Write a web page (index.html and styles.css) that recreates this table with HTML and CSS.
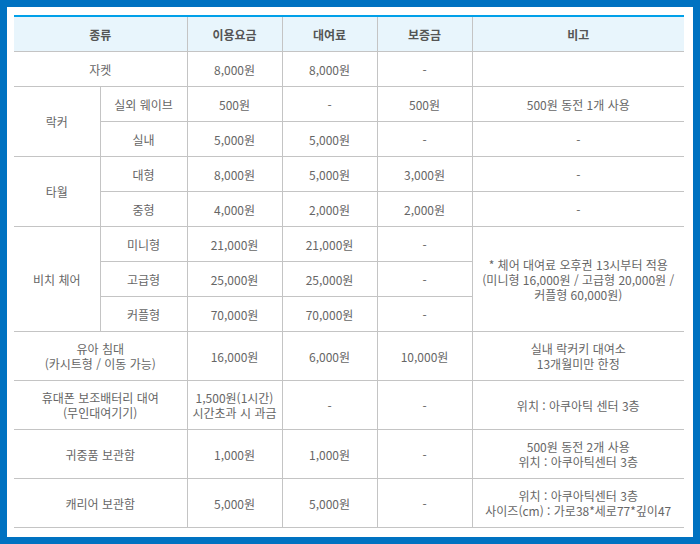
FILE: index.html
```html
<!DOCTYPE html>
<html lang="ko">
<head>
<meta charset="utf-8">
<link rel="stylesheet" href="styles.css">
</head>
<body>
<div class="frame">
<table class="fee">
<colgroup>
<col class="c1"><col class="c2"><col class="c3"><col class="c4"><col class="c5"><col class="c6">
</colgroup>
<thead>
<tr><th colspan="2">종류</th><th>이용요금</th><th>대여료</th><th>보증금</th><th>비고</th></tr>
</thead>
<tbody>
<tr><td colspan="2">자켓</td><td>8,000원</td><td>8,000원</td><td>-</td><td></td></tr>
<tr><td rowspan="2" class="lead">락커</td><td>실외 웨이브</td><td>500원</td><td>-</td><td>500원</td><td>500원 동전 1개 사용</td></tr>
<tr><td>실내</td><td>5,000원</td><td>5,000원</td><td>-</td><td>-</td></tr>
<tr><td rowspan="2" class="lead">타월</td><td>대형</td><td>8,000원</td><td>5,000원</td><td>3,000원</td><td>-</td></tr>
<tr><td>중형</td><td>4,000원</td><td>2,000원</td><td>2,000원</td><td>-</td></tr>
<tr><td rowspan="3" class="lead">비치 체어</td><td>미니형</td><td>21,000원</td><td>21,000원</td><td>-</td><td rowspan="3">* 체어 대여료 오후권 13시부터 적용<br>(미니형 16,000원 / 고급형 20,000원 /<br>커플형 60,000원)</td></tr>
<tr><td>고급형</td><td>25,000원</td><td>25,000원</td><td>-</td></tr>
<tr><td>커플형</td><td>70,000원</td><td>70,000원</td><td>-</td></tr>
<tr class="tall"><td colspan="2">유아 침대<br>(카시트형 / 이동 가능)</td><td>16,000원</td><td>6,000원</td><td>10,000원</td><td>실내 락커키 대여소<br>13개월미만 한정</td></tr>
<tr class="tall"><td colspan="2">휴대폰 보조배터리 대여<br>(무인대여기기)</td><td>1,500원(1시간)<br>시간초과 시 과금</td><td>-</td><td>-</td><td>위치 : 아쿠아틱 센터 3층</td></tr>
<tr class="tall"><td colspan="2">귀중품 보관함</td><td>1,000원</td><td>1,000원</td><td>-</td><td>500원 동전 2개 사용<br>위치 : 아쿠아틱센터 3층</td></tr>
<tr class="tall"><td colspan="2">캐리어 보관함</td><td>5,000원</td><td>5,000원</td><td>-</td><td>위치 : 아쿠아틱센터 3층<br>사이즈(cm) : 가로38*세로77*깊이47</td></tr>
</tbody>
</table>
</div>
</body>
</html>
```
FILE: styles.css
```css
html, body {
  margin: 0;
  padding: 0;
  background: #ffffff;
}
.frame {
  box-sizing: border-box;
  width: 700px;
  height: 544px;
  border: 7px solid #0072c1;
  background: #ffffff;
  padding: 8px 9px 10px 7px;
}
.fee {
  width: 670px;
  table-layout: fixed;
  border-collapse: collapse;
  border-top: 2px solid #00a0e9;
  font-family: "Noto Sans CJK KR", "Noto Sans", sans-serif;
  font-size: 12px;
  line-height: 15px;
  color: #666666;
}
.c1 { width: 86px; }
.c2 { width: 87px; }
.c3 { width: 95px; }
.c4 { width: 95px; }
.c5 { width: 95px; }
.c6 { width: 212px; }
.fee th, .fee td {
  border: 1px solid #c4c4c4;
  text-align: center;
  vertical-align: middle;
  padding: 0;
  height: 34px;
}
.fee th:first-child, .fee td:first-child { border-left: none; }
.fee th:last-child, .fee td:last-child { border-right: none; }
.fee tbody tr:not(:first-child) td.lead { border-left: none; }
.fee th {
  background: #e8f5fc;
  color: #555555;
  font-weight: bold;
  border-top: none;
  height: 34px;
}
.fee tr.tall td { height: 48px; }
```
